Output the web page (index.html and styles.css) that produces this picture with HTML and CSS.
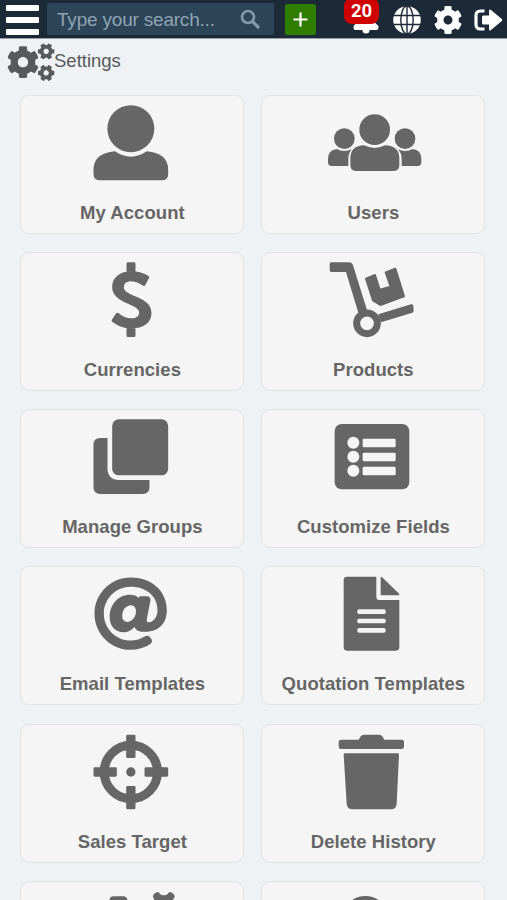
FILE: index.html
```html
<!DOCTYPE html>
<html lang="en">
<head>
<meta charset="utf-8">
<title>Settings</title>
<link rel="stylesheet" href="styles.css">
</head>
<body>
<svg class="defs" aria-hidden="true"><defs>
<path id="cog" d="M487.4 315.7l-42.6-24.6c4.3-23.2 4.3-47 0-70.2l42.6-24.6c4.9-2.8 7.1-8.6 5.5-14-11.1-35.6-30-67.8-54.7-94.6-3.8-4.1-10-5.1-14.8-2.3L380.8 110c-17.9-15.4-38.5-27.3-60.8-35.1V25.8c0-5.6-3.9-10.5-9.4-11.7-36.7-8.2-74.3-7.8-109.2 0-5.5 1.2-9.4 6.1-9.4 11.7V75c-22.2 7.9-42.8 19.8-60.8 35.1L88.7 85.5c-4.9-2.8-11-1.9-14.8 2.3-24.7 26.7-43.6 58.9-54.7 94.6-1.7 5.4.6 11.2 5.5 14L67.3 221c-4.3 23.2-4.3 47 0 70.2l-42.6 24.6c-4.9 2.8-7.1 8.6-5.5 14 11.1 35.6 30 67.8 54.7 94.6 3.8 4.1 10 5.1 14.8 2.3l42.6-24.6c17.9 15.4 38.5 27.3 60.8 35.1v49.2c0 5.6 3.9 10.5 9.4 11.7 36.7 8.2 74.3 7.8 109.2 0 5.5-1.2 9.4-6.1 9.4-11.7v-49.2c22.2-7.9 42.8-19.8 60.8-35.1l42.6 24.6c4.9 2.8 11 1.9 14.8-2.3 24.7-26.7 43.6-58.9 54.7-94.6 1.5-5.5-.7-11.3-5.6-14.1zM256 336c-44.1 0-80-35.9-80-80s35.9-80 80-80 80 35.9 80 80-35.9 80-80 80z"/>
</defs></svg>
<header class="topbar">
  <button class="menu" aria-label="Menu"><i></i><i></i><i></i></button>
  <div class="search"><span>Type your search...</span>
    <svg width="20" height="20" viewBox="0 0 20 20" fill="none" stroke="#8299a9"><circle cx="8" cy="8" r="6" stroke-width="2.6"/><path d="M12.5 12.5L18 18" stroke-width="3.2" stroke-linecap="round"/></svg>
  </div>
  <button class="add" aria-label="Add"><svg width="31" height="31" viewBox="0 0 31 31" stroke="#fff" stroke-width="2.200"><path d="M15.500 8.500v14M8.500 15.500h14"/></svg></button>
  <div class="bell">
    <svg width="26" height="28" viewBox="0 0 26 28" fill="#fff"><path d="M13 1C8 1 5 5 5 11c0 5-1 6-4 8.500-1 1.500-.3 4.500 1 4.500h22c1.300 0 2-3 1-4.500-3-2.500-4-3.500-4-8.500C21 5 18 1 13 1zM9.500 24a3.500 3.500 0 0 0 7 0z"/></svg>
    <span class="badge">20</span>
  </div>
  <svg class="globe" width="28" height="28" viewBox="0 0 28 28"><circle cx="14" cy="14" r="13.800" fill="#fff"/><g fill="none" stroke="#1c2936" stroke-width="1.400"><ellipse cx="14" cy="14" rx="6.200" ry="14"/><path d="M14 0v28M0 9.500h28M0 18.500h28"/></g></svg>
  <svg class="gear" width="28" height="28" viewBox="8 8 496 496" fill="#fff"><use href="#cog"/></svg>
  <svg class="exit" width="29" height="24" viewBox="0 0 29 24" fill="#fff"><path d="M10.500 3H6.500Q2 3 2 7.500v9Q2 21 6.500 21h4" fill="none" stroke="#fff" stroke-width="3.200"/><path d="M8 9Q8 7.500 9.500 7.500H15V3q0-2.500 2-1l10.800 9q1 1 0 2L17 22q-2 1.500-2-1v-4.500H9.500Q8 16.500 8 15z"/></svg>
</header>
<main>
  <h1 class="title"><svg width="48" height="39" viewBox="21 129 144 117" fill="#58595b">
    <use href="#cog" transform="translate(19.500 137) scale(.193)"/>
    <use href="#cog" transform="translate(138.500 154) rotate(30) scale(.1) translate(-256 -256)"/>
    <use href="#cog" transform="translate(138.500 219) rotate(30) scale(.1) translate(-256 -256)"/>
  </svg><span>Settings</span></h1>
  <div class="grid">
    <a class="card"><svg viewBox="34.500 33 666 255"><circle cx="364" cy="131" r="70.500"/><path d="M316 199q48 32 96 0 64 6 64 55v12q0 20-20 20H272q-20 0-20-20v-12q0-49 64-55z"/></svg><span>My Account</span></a>
    <a class="card"><svg viewBox="22 33 666 255"><circle cx="360" cy="134" r="46"/><circle cx="269" cy="161" r="31"/><circle cx="451" cy="161" r="31"/><path d="M329 181q31 16 62 0 43 1 43 40v18q0 19-19 19H306q-19 0-19-19v-18q0-39 42-40zM246 192q23 12 45 1-10 12-10 28v22h-50q-11 0-11-12v-9q0-27 26-30zM474 192q-23 12-44 1 11 12 11 28v22h48q11 0 11-12v-9q0-27-26-30z"/></svg><span>Users</span></a>
    <a class="card"><svg viewBox="34.500 24 666 255"><path d="M355 52h19q4 0 4 4v27h-27V56q0-4 4-4zM351 245h27v27q0 4-4 4h-19q-4 0-4-4zM417 93q3 2 2 5l-12 23q-3 3-6 1-20-13-40-13-18 2-18 18c0 29 83 26 83 77 0 31-26 46-60 46-25 0-44-9-58-20q-3-3-1-6l13-19q3-3 7-1 17 16 39 16c14 0 23-6 23-18 0-26-81-26-81-76 0-31 27-47 56-47q33 0 53 14z"/></svg><span>Currencies</span></a>
    <a class="card"><svg viewBox="22 24 666 255"><path d="M230 52h53q9 0 12 9l42 134-26 8-37-122h-44q-5 0-5-5V57q0-5 5-5z"/><circle class="line" cx="337" cy="235" r="31" stroke-width="21"/><path d="M371 208l98-30q6-2 7 4l1 15q0 5-4 6l-94 29z"/><path d="M334 101l27-11 14 44 33-9-15-43 29-11 26 83-71 26-22-14z" stroke="#666" stroke-width="6" stroke-linejoin="round"/></svg><span>Products</span></a>
    <a class="card"><svg viewBox="34.500 31 666 255"><rect x="308" y="59" width="168" height="168" rx="20"/><path d="M272 115h22v91q0 35 35 35h91v22q0 20-20 20H272q-20 0-20-20V135q0-20 20-20z"/></svg><span>Manage Groups</span></a>
    <a class="card"><svg viewBox="757 31 666 255"><rect x="975" y="73" width="224" height="196" rx="21"/><g fill="#f5f5f5"><circle cx="1031" cy="129" r="18"/><circle cx="1031" cy="171" r="18"/><circle cx="1031" cy="213" r="18"/><rect x="1059" y="117" width="99" height="26" rx="4"/><rect x="1059" y="159" width="99" height="26" rx="4"/><rect x="1059" y="201" width="99" height="26" rx="4"/></g></svg><span>Customize Fields</span></a>
    <a class="card"><svg viewBox="34.500 22 666 255"><path transform="translate(251.500 50) scale(.4375)" d="M256 8C118.941 8 8 118.919 8 256c0 137.059 110.919 248 248 248 48.154 0 95.342-14.140 135.408-40.223 12.005-7.815 14.625-24.288 5.552-35.372l-10.177-12.433c-7.671-9.371-21.179-11.667-31.373-5.129C325.920 429.757 291.314 440 256 440c-101.458 0-184-82.542-184-184S154.542 72 256 72c100.139 0 184 57.619 184 160 0 38.786-21.093 79.742-58.170 83.693-17.349-.454-16.910-12.857-13.476-30.024l23.433-121.110C394.653 149.750 383.308 136 368.225 136h-44.981a13.518 13.518 0 0 0-13.432 11.993l-.01.092c-14.697-17.901-40.448-21.775-59.971-21.775-74.580 0-137.831 62.234-137.831 151.460 0 65.303 36.785 105.870 96 105.870 26.984 0 57.369-15.637 74.991-38.333 9.522 34.104 40.613 34.103 70.710 34.103C462.609 379.410 504 307.798 504 232 504 95.653 394.023 8 256 8zm-21.680 304.430c-22.249 0-36.070-15.623-36.070-40.771 0-44.993 30.779-72.729 58.630-72.729 22.292 0 35.601 15.241 35.601 40.770 0 45.061-33.875 72.730-58.161 72.730z"/></svg><span>Email Templates</span></a>
    <a class="card"><svg viewBox="757 22 666 255"><path d="M1012 51h88v60q0 10 10 10h59v142q0 10-10 10h-147q-10 0-10-10V61q0-10 10-10zM1113 51q3 0 6 3l47 46q3 3 3 7h-56z"/><g fill="#f5f5f5"><rect x="1043" y="149" width="85" height="14" rx="5"/><rect x="1043" y="177" width="85" height="14" rx="5"/><rect x="1043" y="205" width="85" height="14" rx="5"/></g></svg><span>Quotation Templates</span></a>
    <a class="card"><svg viewBox="34.500 28 666 255"><circle class="line" cx="364" cy="169" r="80" stroke-width="27"/><circle cx="364" cy="169" r="14"/><rect x="350" y="57" width="28" height="70" rx="4"/><rect x="350" y="211" width="28" height="70" rx="4"/><rect x="252" y="155" width="70" height="28" rx="4"/><rect x="405" y="155" width="71" height="28" rx="4"/></svg><span>Sales Target</span></a>
    <a class="card"><svg viewBox="757 28 666 255"><path d="M994 72h53l5-9q4-6 11-6h45q7 0 11 6l5 9h52q7 0 7 7v14q0 7-7 7H994q-7 0-7-7V79q0-7 7-7zM1006 113h158q4 0 4 4l-7 147q-1 17-18 17h-114q-17 0-18-17l-9-147q0-4 4-4z"/></svg><span>Delete History</span></a>
    <a class="card"><svg viewBox="34.500 500 666 255"><path d="M300 562v-8q1-11 12-11h30q9 0 12 11v30h-54zM430 544q1-11 15-14 4 0 6 5 3 5 12 5t12-5q2-5 7-5 12 3 14 14-8 9-3 17v30h-61v-30q5-8-2-17z"/></svg></a>
    <a class="card"><svg viewBox="757 500 666 255"><circle class="line" cx="1067" cy="613" r="57" stroke-width="28"/></svg></a>
  </div>
</main>
</body>
</html>
```
FILE: styles.css
```css
* { box-sizing: border-box; }
html, body { margin: 0; height: 900px; overflow: hidden; }
body { background: #eef2f4; font-family: "Liberation Sans", Arial, sans-serif; color: #666; }
main { height: 861px; overflow: hidden; }
button { border: 0; padding: 0; background: none; }
.defs { position: absolute; width: 0; height: 0; }
.topbar { display: flex; align-items: center; height: 39px; padding-left: 6px; background: #1c2936; border-bottom: 1px solid #99a1a7; }
.topbar svg { display: block; flex: none; }
.menu { width: 33px; height: 30px; display: flex; flex-direction: column; justify-content: space-between; margin-top: 2px; }
.menu i { height: 6px; border-radius: 1px; background: #fff; }
.search { display: flex; align-items: center; justify-content: space-between; width: 227px; height: 32px; margin-left: 8px; padding: 0 14px 0 10px; background: #2d4558; border-radius: 2px; color: #8fa4b3; font-size: 19px; letter-spacing: -.2px; white-space: nowrap; }
.search span { margin-top: 2px; }
.add { width: 31px; height: 31px; margin-left: 11px; background: #2f7d00; border-radius: 2px; }
.bell { position: relative; margin-left: 37px; margin-top: 2px; }
.badge { position: absolute; left: -9px; top: -8px; width: 35px; height: 26px; border-radius: 8px; background: #d00000; color: #fff; font: bold 18.5px/27px Roboto, sans-serif; text-align: center; }
.globe { margin-left: 14px; margin-top: 2px; }
.gear { margin-left: 13px; margin-top: 2px; }
.exit { margin-left: 12px; margin-top: 2px; }
.title { display: flex; align-items: center; height: 56px; margin: 0; padding: 0 0 10px 7px; font-size: 18.5px; font-weight: 400; color: #58595b; }
.title span { margin-top: -3px; margin-left: -1px; }
.grid { display: grid; grid-template-columns: 224px 224px; grid-auto-rows: 139px; gap: 18.150px 17px; padding-left: 20.400px; }
.card { display: flex; flex-direction: column; align-items: center; border: 1px solid #dfe3e4; border-radius: 9px; background: #f5f5f5; }
.card svg { display: block; width: 222px; height: 85px; flex: none; fill: #666; }
.card .line { fill: none; stroke: #666; }
.card span { margin-top: 21px; font-size: 18.500px; line-height: 22px; font-weight: 700; white-space: nowrap; letter-spacing: .05px; }
```
